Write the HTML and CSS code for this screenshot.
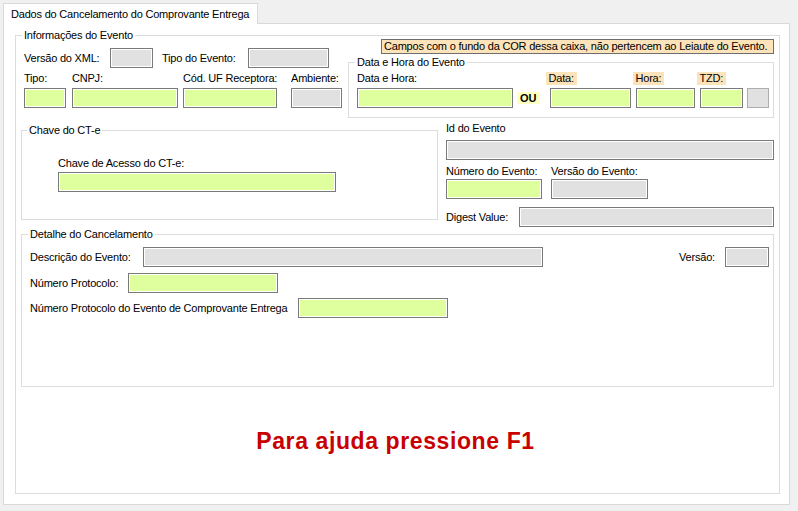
FILE: index.html
```html
<!DOCTYPE html>
<html lang="pt-BR">
<head>
<meta charset="utf-8">
<title>Dados do Cancelamento do Comprovante Entrega</title>
<link rel="stylesheet" href="styles.css">
</head>
<body>
<div class="tabs">
  <div class="tab">Dados do Cancelamento do Comprovante Entrega</div>
</div>
<div class="page">
  <fieldset class="grp grp-info">
    <legend>Informações do Evento</legend>
    <div class="top">
      <div class="top-left">
        <div class="row row-xml">
          <span class="lbl lbl-xml">Versão do XML:</span><span class="fld gray f-xml"></span>
          <span class="lbl lbl-tipoev">Tipo do Evento:</span><span class="fld gray f-tipoev"></span>
        </div>
        <div class="row row-ids">
          <div class="col c-tipo"><span class="lbl">Tipo:</span><span class="fld green"></span></div>
          <div class="col c-cnpj"><span class="lbl">CNPJ:</span><span class="fld green"></span></div>
          <div class="col c-uf"><span class="lbl">Cód. UF Receptora:</span><span class="fld green"></span></div>
          <div class="col c-amb"><span class="lbl">Ambiente:</span><span class="fld gray"></span></div>
        </div>
      </div>
      <div class="top-right">
        <div class="note">Campos com o fundo da COR dessa caixa, não pertencem ao Leiaute do Evento.</div>
        <fieldset class="grp grp-dh">
          <legend>Data e Hora do Evento</legend>
          <div class="row row-dh">
            <div class="col c-dh"><span class="lbl">Data e Hora:</span><span class="fld green"></span></div>
            <span class="ou">OU</span>
            <div class="col c-data"><span class="lbl peach">Data:</span><span class="fld green f-data"></span></div>
            <div class="col c-hora"><span class="lbl peach">Hora:</span><span class="fld green f-hora"></span></div>
            <div class="col c-tzd"><span class="lbl peach">TZD:</span><span class="fld green f-tzd"></span></div>
            <span class="btn"></span>
          </div>
        </fieldset>
      </div>
    </div>
    <div class="mid">
      <fieldset class="grp grp-chave">
        <legend>Chave do CT-e</legend>
        <div class="col c-chave"><span class="lbl">Chave de Acesso do CT-e:</span><span class="fld green f-chave"></span></div>
      </fieldset>
      <div class="mid-right">
        <span class="lbl lbl-id">Id do Evento</span>
        <span class="fld gray"></span>
        <div class="row row-num">
          <div class="col c-num"><span class="lbl">Número do Evento:</span><span class="fld green"></span></div>
          <div class="col c-verev"><span class="lbl">Versão do Evento:</span><span class="fld gray"></span></div>
        </div>
        <div class="row row-digest">
          <span class="lbl lbl-digest">Digest Value:</span><span class="fld gray f-digest"></span>
        </div>
      </div>
    </div>
    <fieldset class="grp grp-det">
      <legend>Detalhe do Cancelamento</legend>
      <div class="row row-desc">
        <span class="lbl lbl-desc">Descrição do Evento:</span><span class="fld gray f-desc"></span>
        <span class="lbl lbl-ver">Versão:</span><span class="fld gray f-ver"></span>
      </div>
      <div class="row row-prot">
        <span class="lbl lbl-prot">Número Protocolo:</span><span class="fld green f-prot"></span>
      </div>
      <div class="row row-prot2">
        <span class="lbl lbl-prot2">Número Protocolo do Evento de Comprovante Entrega</span><span class="fld green f-prot"></span>
      </div>
    </fieldset>
    <div class="help">Para ajuda pressione F1</div>
  </fieldset>
</div>
</body>
</html>
```
FILE: styles.css
```css
* { box-sizing: border-box; }
html, body { margin: 0; padding: 0; }
body {
  width: 798px;
  height: 511px;
  overflow: hidden;
  background: #f0f0f0;
  font-family: "Liberation Sans", Arial, sans-serif;
  font-size: 11px;
  letter-spacing: -0.2px;
  color: #000;
}

.tabs { padding: 3px 0 0 3px; display: flex; }
.tab {
  position: relative;
  z-index: 1;
  width: 255px;
  height: 21px;
  margin-bottom: -1px;
  padding-left: 7px;
  line-height: 20px;
  background: #fff;
  border: 1px solid #d9d9d9;
  border-bottom: none;
  white-space: nowrap;
}
.page {
  margin-left: 3px;
  width: 787px;
  height: 482px;
  padding: 5px 0 0 11px;
  background: #fff;
  border: 1px solid #d9d9d9;
}

/* group boxes */
.grp {
  margin: 0;
  padding: 0;
  min-width: 0;
  border: 1px solid #dcdcdc;
}
.grp > legend {
  padding: 0 2px;
  line-height: 12px;
  font-size: 11px;
}
.grp-info {
  width: 765px;
  height: 465px;
  padding: 0 5px 0 5px;
}
.grp-info > legend { margin-left: 1px; }

/* fields */
.fld {
  display: block;
  height: 20px;
  border: 1px solid #7a7a7a;
  box-shadow: inset 0 0 0 1px #fff;
}
.green { background: #dfff9f; }
.gray { background: #e1e1e1; }
.lbl { display: block; line-height: 13px; white-space: nowrap; }
.row { display: flex; }
.col { display: flex; flex-direction: column; align-items: flex-start; }
.col > .lbl { margin-bottom: 3px; }
.col > .fld { width: 100%; }

/* top */
.top { display: grid; grid-template-columns: 327px 426px; }
.row-xml { margin-top: 7px; align-items: center; }
.lbl-xml { margin-left: 3px; width: 86px; }
.f-xml { width: 43px; }
.lbl-tipoev { margin-left: 9px; width: 86px; }
.f-tipoev { width: 81px; }
.row-ids { margin-top: 4px; }
.c-tipo { margin-left: 3px; width: 42px; }
.c-cnpj { margin-left: 6px; width: 106px; }
.c-uf { margin-left: 5px; width: 94px; }
.c-amb { margin-left: 14px; width: 51px; }

.top-right { margin-top: -2px; display: flex; flex-direction: column; }
.note {
  align-self: flex-end;
  width: 393px;
  height: 15px;
  padding-left: 2px;
  line-height: 13px;
  background: #fde3b9;
  border: 1px solid #6e6e6e;
  white-space: nowrap;
  overflow: hidden;
}
.grp-dh { margin-top: 2px; width: 426px; padding: 0 0 9px 8px; }
.grp-dh > legend { margin-left: -2px; }
.row-dh { margin-top: 4px; align-items: flex-end; }
.c-dh { width: 156px; }
.ou {
  margin: 0 0 4px 4px;
  padding: 0 3px;
  line-height: 12px;
  font-weight: bold;
  letter-spacing: 0;
  background: #ffffc0;
}
.peach { background: #fde3b9; padding: 0 3px; }
.c-data { margin-left: 6px; }
.c-hora, .c-tzd { margin-left: 2px; }
.col > .f-data { width: 81px; margin-left: 4px; }
.col > .f-hora { width: 59px; margin-left: 3px; }
.col > .f-tzd { width: 43px; margin-left: 3px; }
.btn {
  display: block;
  margin-left: 4px;
  width: 22px;
  height: 20px;
  background: #e1e1e1;
  border: 1px solid #adadad;
}

/* middle */
.mid {
  margin-top: 4px;
  display: grid;
  grid-template-columns: 417px 328px;
  column-gap: 8px;
  align-items: start;
}
.grp-chave { margin-top: 2px; padding: 0 0 27px 0; }
.grp-chave > legend { margin-left: 5px; }
.c-chave { margin: 21px 0 0 36px; }
.c-chave > .lbl { margin-bottom: 2px; }
.col > .f-chave { width: 278px; }
.mid-right { display: flex; flex-direction: column; }
.lbl-id { margin-bottom: 5px; }
.row-num { margin-top: 5px; }
.row-num .col > .lbl { margin-bottom: 1px; }
.c-num { width: 96px; }
.c-verev { margin-left: 9px; width: 97px; }
.row-digest { margin-top: 8px; align-items: center; }
.lbl-digest { width: 73px; }
.f-digest { flex: 1; }

/* detalhe */
.grp-det { margin-top: 1px; padding: 0 4px 68px 8px; }
.grp-det > legend { margin-left: -2px; }
.row-desc { margin-top: 7px; align-items: center; }
.lbl-desc { width: 113px; }
.f-desc { width: 400px; }
.lbl-ver { margin-left: auto; width: 46px; }
.f-ver { width: 44px; }
.row-prot { margin-top: 6px; align-items: center; }
.lbl-prot { width: 98px; }
.f-prot { width: 150px; }
.row-prot2 { margin-top: 5px; align-items: center; }
.lbl-prot2 { width: 268px; }

.help {
  margin-top: 41px;
  padding-right: 4px;
  text-align: center;
  line-height: 26px;
  font-size: 23px;
  font-weight: bold;
  letter-spacing: 0.6px;
  color: #c80000;
}
```
